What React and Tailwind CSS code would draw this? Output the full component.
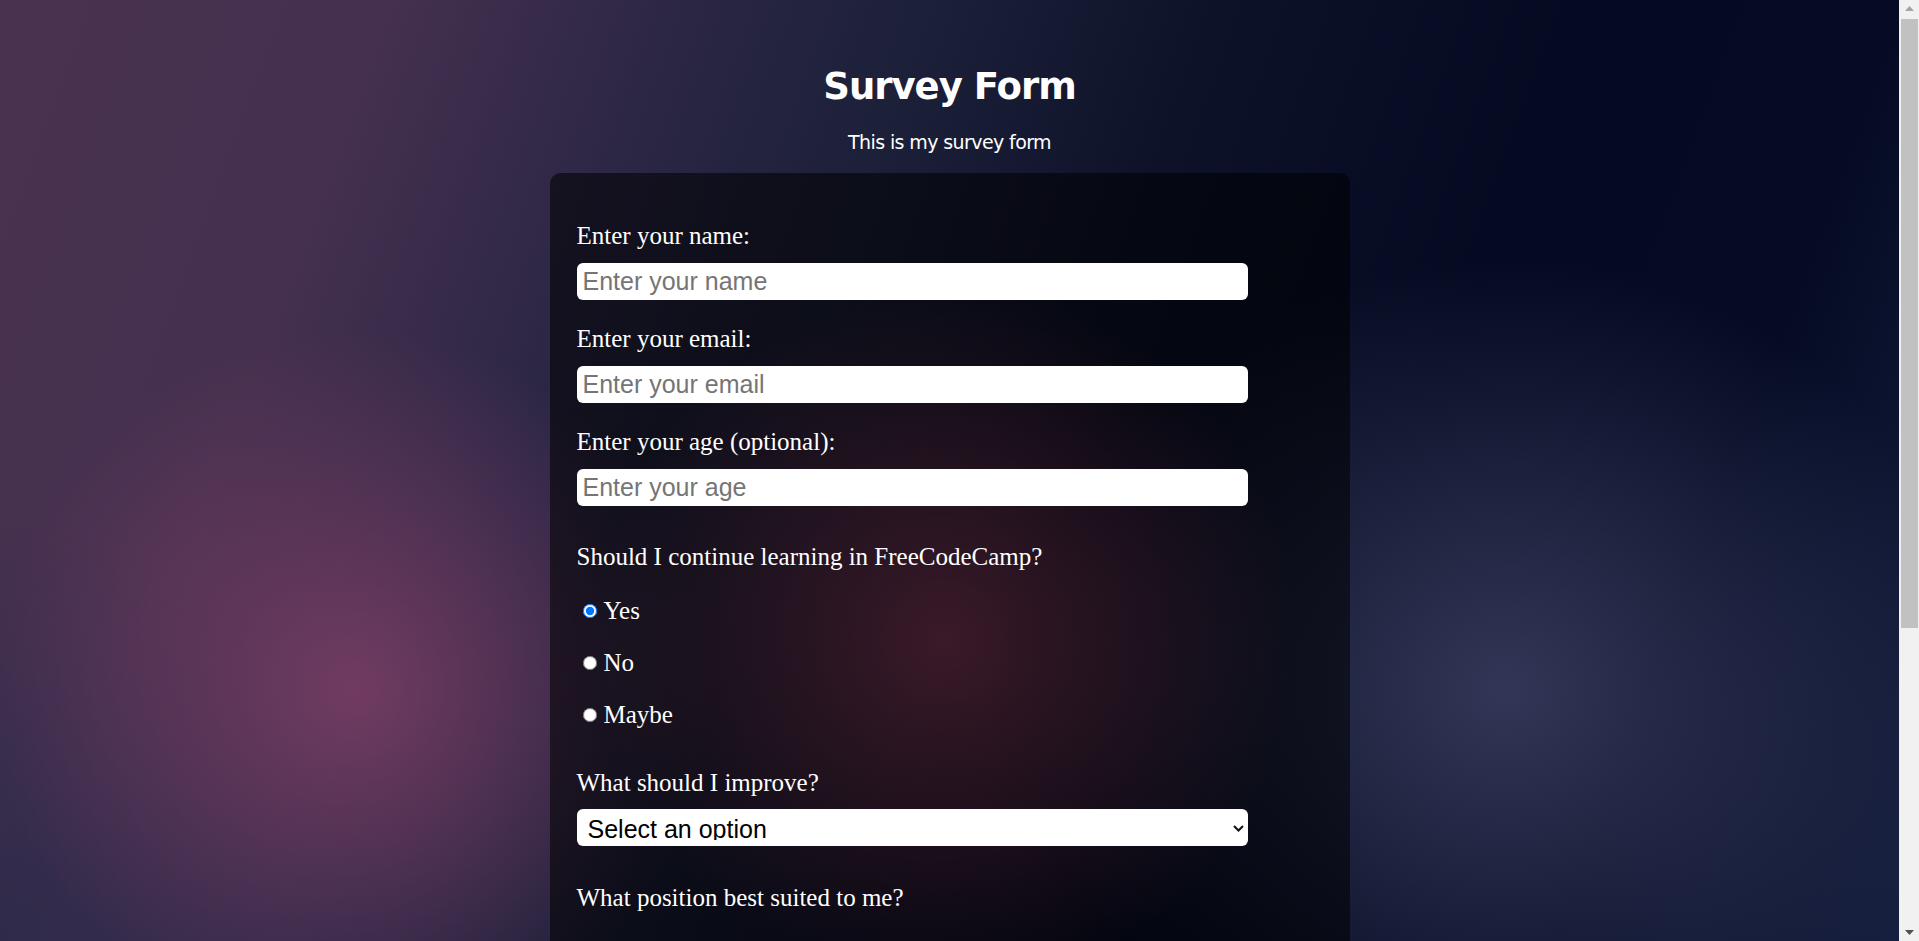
import { useState } from "react";

const labelCls = "block font-['Liberation_Serif',serif] text-[25px] leading-[28px] text-white";
const inputCls =
  "block w-[671px] h-[37px] rounded-[6px] bg-white pl-[6px] font-['Liberation_Sans',Arial,sans-serif] text-[25px] text-black outline-none placeholder:text-[#757575]";

const Chevron = () => (
  <svg width="11" height="7" viewBox="0 0 11 7" fill="none" className="shrink-0">
    <path d="M1 1l4.5 4.5L10 1" stroke="#111" strokeWidth="2" />
  </svg>
);

const FakeSelect = ({ text }) => (
  <div className="relative w-[671px] h-[37px] rounded-[6px] bg-white">
    <div className="h-[31px] overflow-hidden pl-[11px] pt-[6px]">
      <span className="block font-['Liberation_Sans',Arial,sans-serif] text-[25px] leading-[29px] text-black">
        {text}
      </span>
    </div>
    <div className="absolute right-[4px] top-[16px]">
      <Chevron />
    </div>
  </div>
);

const Radio = ({ name, value, label, checked, onChange }) => (
  <label className="flex items-center h-[28px] cursor-pointer">
    <input
      type="radio"
      name={name}
      value={value}
      checked={checked}
      onChange={onChange}
      className="m-0 ml-[6px] mr-[7px] w-[14px] h-[14px] accent-[#0075ff]"
    />
    <span className="font-['Liberation_Serif',serif] text-[25px] leading-[28px] text-white">{label}</span>
  </label>
);

const Check = ({ label }) => (
  <label className="flex items-center h-[28px]">
    <input type="checkbox" className="m-0 ml-[6px] mr-[7px] w-[14px] h-[14px]" />
    <span className="font-['Liberation_Serif',serif] text-[25px] leading-[28px] text-white">{label}</span>
  </label>
);

// browser scrollbar as it shows in the screenshot
const Scrollbar = () => (
  <aside aria-hidden="true" className="sticky top-0 self-start h-screen w-[20px] shrink-0 flex flex-col bg-[#f1f1f1]">
    <div className="h-[17px] flex items-center justify-center">
      <svg width="9" height="5" viewBox="0 0 9 5"><path d="M0 5L4.5 0L9 5z" fill="#a3a3a3" /></svg>
    </div>
    <div className="mt-[2px] ml-[2px] mr-[1px] h-[609px] bg-[#c1c1c1]" />
    <div className="flex-1" />
    <div className="h-[17px] flex items-center justify-center">
      <svg width="9" height="5" viewBox="0 0 9 5"><path d="M0 0L4.5 5L9 0z" fill="#505050" /></svg>
    </div>
  </aside>
);

export default function App() {
  const [learn, setLearn] = useState("yes");

  return (
    <div className="flex min-h-screen bg-fixed bg-[radial-gradient(circle_350px_at_945px_640px,rgba(150,64,98,0.85),rgba(150,64,98,0)),radial-gradient(circle_360px_at_355px_690px,rgba(124,62,102,0.85),rgba(124,62,102,0)),radial-gradient(ellipse_480px_430px_at_1505px_690px,rgba(62,66,100,0.8),rgba(62,66,100,0)),radial-gradient(circle_420px_at_0px_941px,rgba(38,40,72,0.7),rgba(38,40,72,0)),linear-gradient(110deg,#48324f_0%,#45304f_17%,#2a2644_31%,#1c2039_41%,#0d1229_54%,#040a21_70%,#050b23_84%,#172040_100%)]">
      <main className="flex-1 min-w-0 pt-[64px] pb-[80px] text-white">
        <h1 className="text-center font-['DejaVu_Sans',sans-serif] text-[37px] leading-[46px] font-bold tracking-[-1px]">
          Survey Form
        </h1>
        <p className="mt-[20px] text-center font-['DejaVu_Sans',sans-serif] text-[19px] leading-[24px] tracking-[-0.6px]">
          This is my survey form
        </p>

        <form
          className="mx-auto mt-[19px] w-[800px] rounded-[11px] bg-[rgba(0,0,0,0.55)] px-[27px] pt-[49px] pb-[60px]"
          onSubmit={(e) => e.preventDefault()}
        >
          <label htmlFor="name" className={labelCls}>Enter your name:</label>
          <input id="name" type="text" placeholder="Enter your name" className={`mt-[13px] ${inputCls}`} />

          <label htmlFor="email" className={`mt-[25px] ${labelCls}`}>Enter your email:</label>
          <input id="email" type="email" placeholder="Enter your email" className={`mt-[13px] ${inputCls}`} />

          <label htmlFor="age" className={`mt-[25px] ${labelCls}`}>Enter your age (optional):</label>
          <input id="age" type="number" placeholder="Enter your age" className={`mt-[13px] ${inputCls}`} />

          <p className={`mt-[37px] ${labelCls}`}>Should I continue learning in FreeCodeCamp?</p>
          <div className="mt-[26px] flex flex-col gap-[24px]">
            <Radio name="learn" value="yes" label="Yes" checked={learn === "yes"} onChange={() => setLearn("yes")} />
            <Radio name="learn" value="no" label="No" checked={learn === "no"} onChange={() => setLearn("no")} />
            <Radio name="learn" value="maybe" label="Maybe" checked={learn === "maybe"} onChange={() => setLearn("maybe")} />
          </div>

          <p className={`mt-[40px] ${labelCls}`}>What should I improve?</p>
          <div className="mt-[12px]">
            <FakeSelect text="Select an option" />
          </div>

          <p className={`mt-[38px] ${labelCls}`}>What position best suited to me?</p>
          <div className="mt-[26px] flex flex-col gap-[24px]">
            <Check label="Front-end Developer" />
            <Check label="Back-end Developer" />
            <Check label="Full-stack Developer" />
          </div>

          <label htmlFor="comments" className={`mt-[40px] ${labelCls}`}>Any comments or suggestions?</label>
          <textarea
            id="comments"
            placeholder="Enter your comment here..."
            className="mt-[13px] block w-[671px] h-[110px] rounded-[6px] bg-white p-[6px] font-['Liberation_Sans',Arial,sans-serif] text-[25px] text-black outline-none placeholder:text-[#757575]"
          />

          <button
            type="submit"
            className="mt-[40px] block w-[671px] h-[48px] rounded-[6px] bg-[#3b82f6] font-['Liberation_Sans',Arial,sans-serif] text-[25px] text-white"
          >
            Submit
          </button>
        </form>
      </main>
      <Scrollbar />
    </div>
  );
}
